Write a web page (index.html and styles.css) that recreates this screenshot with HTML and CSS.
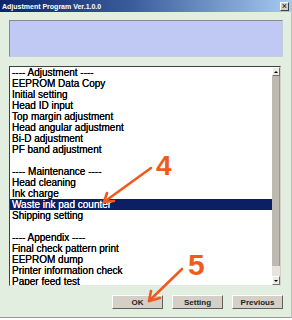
FILE: index.html
```html
<!DOCTYPE html>
<html lang="en">
<head>
    <meta charset="UTF-8">
    <title>Adjustment Program Ver.1.0.0</title>
    <link rel="stylesheet" href="styles.css">
</head>
<body>

<div class="window">
    <div class="titlebar">
        <span class="title">Adjustment Program Ver.1.0.0</span>
        <span class="close">&times;</span>
    </div>

    <div class="client">
        <div class="status"></div>

        <div class="listbox">
            <ul class="items">
                <li>---- Adjustment ----</li>
                <li>EEPROM Data Copy</li>
                <li>Initial setting</li>
                <li>Head ID input</li>
                <li>Top margin adjustment</li>
                <li>Head angular adjustment</li>
                <li>Bi-D adjustment</li>
                <li>PF band adjustment</li>
                <li>&nbsp;</li>
                <li>---- Maintenance ----</li>
                <li>Head cleaning</li>
                <li>Ink charge</li>
                <li class="selected">Waste ink pad counter</li>
                <li>Shipping setting</li>
                <li>&nbsp;</li>
                <li>---- Appendix ----</li>
                <li>Final check pattern print</li>
                <li>EEPROM dump</li>
                <li>Printer information check</li>
                <li>Paper feed test</li>
            </ul>
            <div class="scrollbar">
                <div class="sb-btn"><span class="arrow-up"></span></div>
                <div class="sb-thumb"></div>
                <div class="sb-track"></div>
                <div class="sb-btn"><span class="arrow-down"></span></div>
            </div>
        </div>

        <div class="buttons">
            <button>OK</button>
            <button>Setting</button>
            <button>Previous</button>
        </div>
    </div>

    <!-- annotation marks drawn over the dialog -->
    <svg class="marks" width="292" height="320" viewBox="0 0 292 320">
        <g stroke="#f05a1e" stroke-width="2.6" stroke-linecap="round" stroke-linejoin="round" fill="none">
            <path d="M151 168 L104 202"/>
            <path d="M104 202 L107 193 M104 202 L114 201"/>
            <path d="M182 269 L149 301"/>
            <path d="M149 301 L151 291 M149 301 L160 298"/>
        </g>
    </svg>
    <div class="num four">4</div>
    <div class="num five">5</div>
</div>

</body>
</html>
```

FILE: styles.css
```css
body {
    margin: 0;
    padding: 0;
    background-color: #ffffff;
    font-family: "Liberation Sans", Arial, sans-serif;
}
.window {
    position: relative;
    width: 292px;
    height: 318px;
    box-sizing: border-box;
    background-color: #e2eee0;
    border-bottom: 1px solid #9a9a9a;
    border-right: 1px solid #b8c4b6;
    overflow: hidden;
}
.titlebar {
    height: 12px;
    display: flex;
    align-items: center;
    justify-content: space-between;
    padding: 0 2px 0 2px;
    background: linear-gradient(to right, #0a246a, #3a5c9c 45%, #a6caf0);
}
.title {
    color: #fff;
    font-size: 7px;
    font-weight: bold;
}
.close {
    width: 9px;
    height: 9px;
    box-sizing: border-box;
    background-color: #d4d0c8;
    border: 1px solid;
    border-color: #fff #404040 #404040 #fff;
    font-size: 9px;
    line-height: 6px;
    text-align: center;
    color: #000;
}
.client {
    padding: 8px 8px 0 9px;
}
.status {
    height: 37px;
    box-sizing: border-box;
    background-color: #c0c8f4;
    border: 1px solid;
    border-color: #8a8a8a #c8ccd8 #c8ccd8 #8a8a8a;
}
.listbox {
    display: flex;
    margin-top: 9px;
    margin-right: 2px;
    height: 220px;
    box-sizing: border-box;
    background-color: #fff;
    border: 1px solid;
    border-color: #404040 #d4d0c8 #e8e8e8 #404040;
    overflow: hidden;
}
.items {
    flex: 1;
    list-style: none;
    margin: 0;
    padding: 0;
    font-size: 10px;
    line-height: 11px;
    color: #000;
    text-shadow: 0 0 0.4px #000;
}
.items li {
    padding-left: 2px;
    white-space: nowrap;
}
.items li.selected {
    background-color: #0c1e64;
    color: #fff;
    text-shadow: 0 0 0.4px #fff;
}
.scrollbar {
    width: 8px;
    display: flex;
    flex-direction: column;
    background-color: #e6e4de;
}
.sb-btn {
    height: 9px;
    box-sizing: border-box;
    background-color: #ecebe8;
    border: 1px solid;
    border-color: #fff #707070 #707070 #fff;
    display: flex;
    align-items: center;
    justify-content: center;
}
.sb-thumb {
    height: 190px;
    background-color: #bfbab0;
    border-right: 1px solid #9c988f;
}
.sb-track {
    flex: 1;
}
.arrow-up {
    border-left: 2px solid transparent;
    border-right: 2px solid transparent;
    border-bottom: 2px solid #000;
}
.arrow-down {
    border-left: 2px solid transparent;
    border-right: 2px solid transparent;
    border-top: 2px solid #000;
}
.buttons {
    display: flex;
    justify-content: flex-end;
    gap: 9px;
    margin-top: 9px;
}
.buttons button {
    width: 51px;
    height: 14px;
    padding: 0;
    box-sizing: border-box;
    background-color: #d4d0c8;
    border: 1px solid;
    border-color: #fff #606060 #606060 #fff;
    font-family: "Liberation Sans", Arial, sans-serif;
    font-size: 8px;
    font-weight: bold;
    color: #222;
}
.marks {
    position: absolute;
    left: 0;
    top: 0;
}
.num {
    position: absolute;
    color: #f05a1e;
    font-weight: bold;
    line-height: 1;
}
.num.four {
    left: 156px;
    top: 152px;
    font-size: 28px;
}
.num.five {
    left: 188px;
    top: 250px;
    font-size: 30px;
}
```
